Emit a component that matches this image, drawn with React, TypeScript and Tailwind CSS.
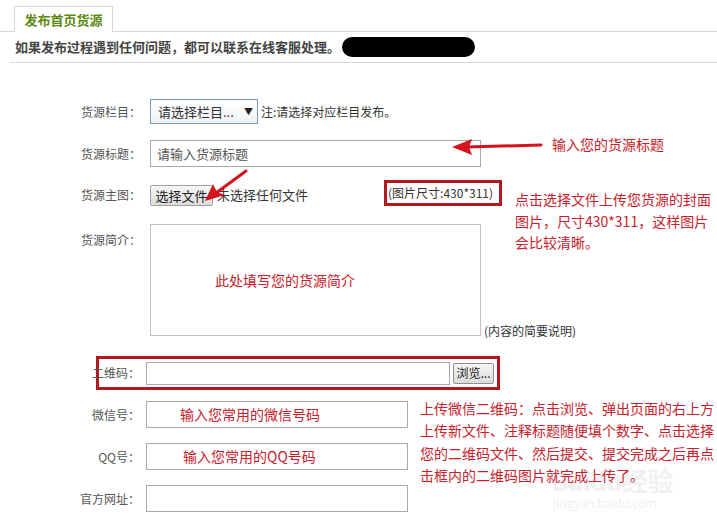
const font = "font-['Noto_Sans_CJK_SC','Liberation_Sans',sans-serif]";

function Label({ text, w }: { text: string; w: string }) {
  return (
    <div className={`${w} shrink-0 text-right text-[12px] text-[#555] whitespace-nowrap`}>
      {text}
    </div>
  );
}

export default function App() {
  return (
    <div className={`relative w-[717px] h-[529px] overflow-hidden bg-white ${font}`}>
      {/* tab strip */}
      <div className="pt-[6px] border-b border-[#d6d6d6]">
        <div className="ml-[14px] w-[99px] h-[26px] -mb-px border border-b-0 border-[#d6d6d6] bg-white flex items-center justify-center text-[13px] font-bold text-[#5d8a12]">
          发布首页货源
        </div>
      </div>

      {/* notice */}
      <div className="ml-[10px] h-[31px] border-b border-[#d6d6d6] flex items-center pl-[5px] gap-[2px]">
        <span className="text-[13px] font-bold text-[#444]">如果发布过程遇到任何问题，都可以联系在线客服处理。</span>
        <span className="w-[133px] h-[20px] rounded-full bg-black" />
      </div>

      {/* watermark */}
      <div className="absolute left-[551px] top-[467px] text-[26px] font-bold leading-none text-[#f0f0f0] tracking-tight">
        Baidu经验
      </div>
      <div className="absolute left-[553px] top-[497px] text-[12px] leading-none text-[#f0f0f0]">jingyan.baidu.com</div>

      {/* form */}
      <div className="relative pt-[36px]">
        <div className="flex items-center">
          <Label text="货源栏目：" w="w-[141px]" />
          <div className="ml-[9px] w-[108px] h-[25px] border border-[#7f9db9] bg-gradient-to-b from-white to-[#eef1f6] flex items-center justify-between pl-[7px] pr-[4px] text-[13px] text-[#333]">
            <span>请选择栏目...</span>
            <span className="text-[9px] text-[#222]">▼</span>
          </div>
          <span className="ml-[3px] text-[12px] text-[#333]">注:请选择对应栏目发布。</span>
        </div>

        <div className="flex items-center mt-[16px]">
          <Label text="货源标题：" w="w-[141px]" />
          <div className="ml-[9px] w-[331px] h-[27px] border border-[#a9a9a9] flex items-center pl-[6px] text-[13px] text-[#555]">
            请输入货源标题
          </div>
        </div>

        <div className="flex items-center mt-[15px] h-[26px]">
          <Label text="货源主图：" w="w-[141px]" />
          <button className="ml-[9px] w-[63px] h-[21px] border border-[#a0a0a0] rounded-[2px] bg-gradient-to-b from-[#f6f6f6] to-[#dcdcdc] text-[13px] text-[#222] leading-none">
            选择文件
          </button>
          <span className="ml-[4px] text-[13px] text-[#333]">未选择任何文件</span>
          <div className="ml-[76px] -mt-[4px] w-[118px] h-[26px] border-[3px] border-[#b0191e] flex items-center pl-[1px] text-[12px] text-[#333] whitespace-nowrap">
            (图片尺寸:430*311)
          </div>
        </div>

        <div className="flex items-start mt-[16px]">
          <Label text="货源简介：" w="w-[141px] pt-[7px]" />
          <div className="ml-[9px] w-[331px] h-[112px] border border-[#c4c4c4] flex items-center pl-[64px] text-[14px] text-[#c8202a]">
            此处填写您的货源简介
          </div>
          <span className="self-end ml-[3px] -mb-[4px] text-[12px] text-[#333]">(内容的简要说明)</span>
        </div>

        <div className="mt-[20px] ml-[96px] w-[404px] h-[34px] border-[3px] border-[#b0191e] flex items-center">
          <div className="w-[41px] shrink-0 flex justify-end whitespace-nowrap text-[12px] text-[#555]">二维码：</div>
          <div className="ml-[6px] w-[304px] h-[23px] border border-[#a9a9a9]" />
          <button className="ml-[3px] w-[41px] h-[21px] border border-[#8f8f8f] rounded-[2px] bg-gradient-to-b from-[#f6f6f6] to-[#dcdcdc] text-[12px] text-[#222] leading-none">
            浏览...
          </button>
        </div>

        <div className="flex items-center mt-[11px]">
          <Label text="微信号：" w="w-[140px]" />
          <div className="ml-[6px] w-[262px] h-[27px] border border-[#a9a9a9] flex items-center pl-[33px] text-[14px] text-[#c8202a]">
            输入您常用的微信号码
          </div>
        </div>

        <div className="flex items-center mt-[15px]">
          <Label text="QQ号：" w="w-[140px]" />
          <div className="ml-[6px] w-[262px] h-[27px] border border-[#a9a9a9] flex items-center pl-[36px] text-[14px] text-[#c8202a]">
            输入您常用的QQ号码
          </div>
        </div>

        <div className="flex items-center mt-[15px]">
          <Label text="官方网址：" w="w-[140px]" />
          <div className="ml-[6px] w-[262px] h-[27px] border border-[#a9a9a9]" />
        </div>
      </div>

      {/* annotations */}
      <div className="absolute left-[552px] top-[134px] text-[14px] text-[#c8202a]">输入您的货源标题</div>
      <div className="absolute left-[515px] top-[189px] text-[14px] leading-[21.5px] text-[#c8202a] whitespace-nowrap">
        点击选择文件上传您货源的封面
        <br />
        图片，尺寸430*311，这样图片
        <br />
        会比较清晰。
      </div>
      <div className="absolute left-[420px] top-[397px] text-[14px] leading-[22.3px] text-[#c8202a] whitespace-nowrap">
        上传微信二维码：点击浏览、弹出页面的右上方
        <br />
        上传新文件、注释标题随便填个数字、点击选择
        <br />
        您的二维码文件、然后提交、提交完成之后再点
        <br />
        击框内的二维码图片就完成上传了。
      </div>

      <svg className="absolute left-0 top-0 pointer-events-none" width="717" height="529">
        <line x1="541" y1="145" x2="466" y2="147" stroke="#d3141c" strokeWidth="3" strokeLinecap="round" />
        <polygon points="452,147 472,139 469,147 472,155" fill="#d3141c" />
        <line x1="246" y1="171" x2="216" y2="193" stroke="#d3141c" strokeWidth="3" strokeLinecap="round" />
        <polygon points="205,201 213,184 217,192 225,195" fill="#d3141c" />
      </svg>
    </div>
  );
}
